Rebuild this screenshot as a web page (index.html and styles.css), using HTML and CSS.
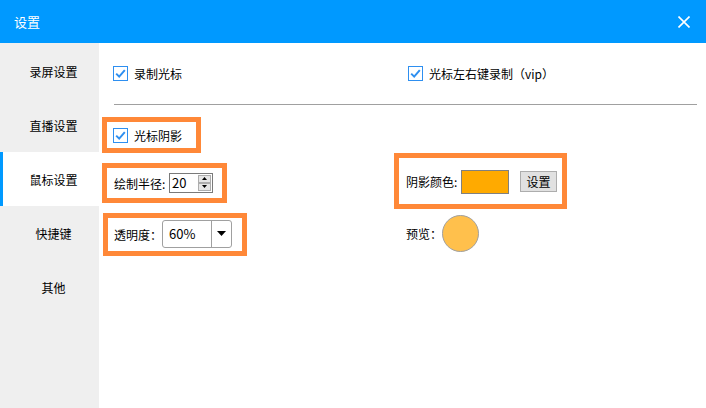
FILE: index.html
```html
<!DOCTYPE html>
<html lang="zh-CN">
<head>
<meta charset="utf-8">
<title>设置</title>
<link rel="stylesheet" href="styles.css">
</head>
<body>
<div class="app">
  <header class="titlebar">
    <span class="title">设置</span>
    <svg class="close" width="12" height="12" viewBox="0 0 12 12"><path d="M0.5 0.5 L11.5 11.5 M11.5 0.5 L0.5 11.5" stroke="#fff" stroke-width="1.6" fill="none"/></svg>
  </header>
  <div class="body">
    <nav class="sidebar">
      <div class="nav-item">录屏设置</div>
      <div class="nav-item">直播设置</div>
      <div class="nav-item active">鼠标设置</div>
      <div class="nav-item">快捷键</div>
      <div class="nav-item">其他</div>
    </nav>
    <main class="main">
      <div class="top-row">
        <label class="check first">
          <svg class="cb" width="15" height="15" viewBox="0 0 15 15"><rect x="0.5" y="0.5" width="14" height="14" fill="#fff" stroke="#2e8ff0"/><path d="M3.2 7.6 L6.2 10.6 L11.8 4.2" stroke="#2e8ff0" stroke-width="2" fill="none"/></svg>
          <span>录制光标</span>
        </label>
        <label class="check">
          <svg class="cb" width="15" height="15" viewBox="0 0 15 15"><rect x="0.5" y="0.5" width="14" height="14" fill="#fff" stroke="#2e8ff0"/><path d="M3.2 7.6 L6.2 10.6 L11.8 4.2" stroke="#2e8ff0" stroke-width="2" fill="none"/></svg>
          <span>光标左右键录制（vip）</span>
        </label>
      </div>
      <div class="divider"></div>
      <div class="lower">
        <div class="col-left">
          <div class="hl hl-shadow">
            <label class="check">
              <svg class="cb" width="15" height="15" viewBox="0 0 15 15"><rect x="0.5" y="0.5" width="14" height="14" fill="#fff" stroke="#2e8ff0"/><path d="M3.2 7.6 L6.2 10.6 L11.8 4.2" stroke="#2e8ff0" stroke-width="2" fill="none"/></svg>
              <span>光标阴影</span>
            </label>
          </div>
          <div class="hl hl-radius">
            <span class="lbl">绘制半径:</span>
            <div class="spin">
              <span class="spin-val">20</span>
              <div class="spin-btns">
                <div class="spin-btn"><svg width="7" height="4" viewBox="0 0 7 4"><path d="M3.5 0 L7 4 L0 4 Z" fill="#000"/></svg></div>
                <div class="spin-btn"><svg width="7" height="4" viewBox="0 0 7 4"><path d="M0 0 L7 0 L3.5 4 Z" fill="#000"/></svg></div>
              </div>
            </div>
          </div>
          <div class="hl hl-opacity">
            <span class="lbl">透明度：</span>
            <div class="combo">
              <span class="combo-val">60%</span>
              <span class="combo-arrow"><svg width="9" height="5" viewBox="0 0 9 5"><path d="M0 0 L9 0 L4.5 5 Z" fill="#000"/></svg></span>
            </div>
          </div>
        </div>
        <div class="col-right">
          <div class="hl hl-color">
            <span class="lbl">阴影颜色:</span>
            <span class="swatch"></span>
            <button class="btn">设置</button>
          </div>
          <div class="preview">
            <span class="lbl">预览：</span>
            <span class="circle"></span>
          </div>
        </div>
      </div>
    </main>
  </div>
</div>
</body>
</html>
```
FILE: styles.css
```css
* { box-sizing: border-box; }
html, body { margin: 0; padding: 0; }
body {
  width: 706px;
  height: 408px;
  overflow: hidden;
  background: #fff;
  font-family: "Noto Sans CJK SC", "Noto Sans", sans-serif;
  font-size: 12px;
  color: #000;
}
.app { display: flex; flex-direction: column; height: 408px; }
.titlebar {
  height: 43px;
  background: #0099ff;
  display: flex;
  align-items: center;
  justify-content: space-between;
  padding: 0 16px 0 14px;
  color: #fff;
}
.title { font-size: 13px; }
.close { display: block; }
.body { flex: 1; display: flex; }
.sidebar {
  width: 99px;
  background: #efefef;
  padding-top: 1px;
}
.nav-item {
  height: 54px;
  display: flex;
  align-items: center;
  justify-content: center;
  padding-left: 8px;
  color: #000;
}
.nav-item.active {
  background: #fff;
  border-left: 3px solid #0099ff;
  padding-left: 5px;
}
.main { flex: 1; }
.top-row {
  display: flex;
  padding: 20px 0 0 14px;
  height: 40px;
}
.check {
  display: flex;
  align-items: center;
  height: 20px;
  gap: 6px;
}
.check.first { width: 295px; }
.cb { display: block; flex: none; }
.divider {
  margin: 21px 9px 0 15px;
  height: 1px;
  background: #a0a0a0;
}
.lower {
  display: flex;
  padding: 12px 0 0 3px;
}
.col-left {
  width: 292px;
  display: flex;
  flex-direction: column;
  align-items: flex-start;
  gap: 10px;
}
.col-right {
  padding-top: 36px;
  display: flex;
  flex-direction: column;
  align-items: flex-start;
}
.hl {
  border: 5px solid #ff8838;
  display: flex;
  align-items: center;
  background: #fff;
}
.hl-shadow { width: 99px; height: 36px; padding-left: 6px; }
.hl-radius { width: 125px; height: 40px; padding-left: 7px; gap: 3px; }
.hl-opacity { width: 144px; height: 43px; padding-left: 6px; margin-left: 1px; }
.hl-color { width: 173px; height: 56px; padding-left: 7px; }
.lbl { white-space: nowrap; }
.hl-radius .lbl { width: 52px; }
.hl-opacity .lbl { width: 48px; }
.hl-color .lbl { width: 55px; }
.spin {
  width: 44px;
  height: 20px;
  border: 1px solid #7a7a7a;
  display: flex;
  align-items: center;
  justify-content: space-between;
  padding: 0 1px 0 2px;
  margin-top: -1px;
  background: #fff;
}
.spin-val { font-size: 13px; line-height: 18px; }
.spin-btns { display: flex; flex-direction: column; gap: 0; }
.spin-btn {
  width: 13px;
  height: 8px;
  background: #e6e6e6;
  border: 1px solid #adadad;
  display: flex;
  align-items: center;
  justify-content: center;
}
.spin-btn svg { display: block; width: 5px; height: 3px; }
.combo {
  width: 70px;
  height: 28px;
  border: 1px solid #a0a0a0;
  border-radius: 3px;
  display: flex;
  margin-top: -2px;
}
.combo-val {
  flex: 1;
  display: flex;
  align-items: center;
  padding-left: 6px;
  font-size: 13px;
  border-right: 1px solid #a0a0a0;
}
.combo-arrow {
  width: 19px;
  display: flex;
  align-items: center;
  justify-content: center;
}
.combo-arrow svg { display: block; }
.swatch {
  width: 48px;
  height: 24px;
  background: #ffaa00;
  border: 1px solid #808080;
  margin-top: 2px;
}
.btn {
  margin-left: 11px;
  width: 37px;
  height: 21px;
  padding: 0;
  font-family: inherit;
  font-size: 12px;
  color: #000;
  background: #e1e1e1;
  border: 1px solid #adadad;
  border-radius: 0;
}
.preview {
  display: flex;
  align-items: center;
  margin-top: 6px;
  padding-left: 12px;
}
.preview .lbl { width: 36px; }
.circle {
  width: 37px;
  height: 37px;
  border-radius: 50%;
  background: #ffc04c;
  border: 1px solid #a0a0a0;
}
```
